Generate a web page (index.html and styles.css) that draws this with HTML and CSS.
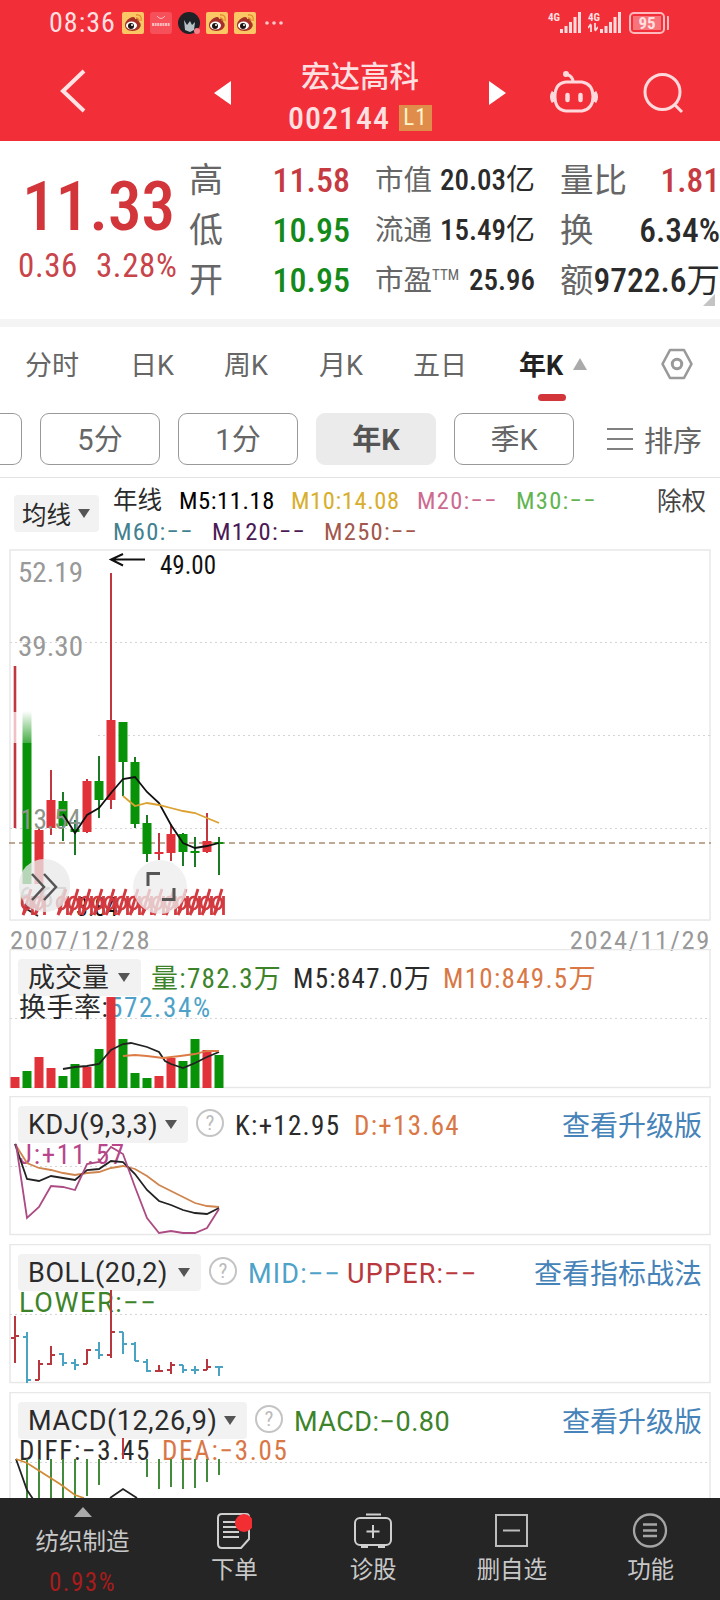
FILE: index.html
```html
<!DOCTYPE html>
<html lang="zh-CN">
<head>
    <meta charset="utf-8">
    <title>宏达高科 002144</title>
    <link rel="stylesheet" href="styles.css">
</head>
<body>
    <svg class="defs" width="0" height="0">
        <symbol id="weibo" viewBox="0 0 22 22">
            <rect width="22" height="22" rx="2" fill="#fbc765"/>
            <path d="M3 13c0-4 5-8 8-8 2 0 2 1 2 2 4-1 5 0 4 3 3 2 2 6-2 8-5 2-12 1-12-5z" fill="#a5302a"/>
            <ellipse cx="9.500" cy="13.500" rx="5.500" ry="4" fill="#fff"/>
            <circle cx="9" cy="14" r="3" fill="#1d1413"/>
            <circle cx="10" cy="13" r="1" fill="#fff"/>
            <path d="M14 3c4-1 6 2 5 6M14 6c2 0 3 1 2 3" fill="none" stroke="#e58a2c" stroke-width="1.300"/>
        </symbol>
        <symbol id="bars" viewBox="0 0 22 21">
            <path d="M1.500 17v4M6 14v7M10.500 10v11M15 5v16M19.500 0v21" stroke="#ffd9db" stroke-width="3"/>
        </symbol>
        <!-- ex-rights mark, repeated under the candles -->
        <symbol id="xr" viewBox="0 0 14 28" overflow="visible">
            <path d="M11 0L3 26M12.500 7v19M6 20l-3 6" fill="none" stroke="#d23a40" stroke-width="2.800"/>
            <ellipse cx="6.500" cy="14" rx="4.500" ry="6" fill="none" stroke="#d23a40" stroke-width="2.600"/>
        </symbol>
    </svg>

    <header class="top">
        <div class="status">
            <span class="clock">08:36</span>
            <svg width="22" height="22"><use href="#weibo"/></svg>
            <svg width="22" height="22" viewBox="0 0 22 22">
                <rect width="22" height="22" rx="3" fill="#f6505a"/>
                <path d="M7 4q4 5 8 0" fill="none" stroke="#fbb" stroke-width="1"/>
                <path d="M2 12.500h18" stroke="#fbb" stroke-width="3" stroke-dasharray="2 .6"/>
            </svg>
            <svg width="22" height="22" viewBox="0 0 22 22">
                <circle cx="11" cy="11" r="11" fill="#1c2226"/>
                <path d="M6 8l3 5 3-4 2 4 3-3-1 8-4 2-5-2z" fill="#b7c3c6"/>
                <circle cx="19" cy="19" r="3" fill="#f5808a"/>
            </svg>
            <svg width="22" height="22"><use href="#weibo"/></svg>
            <svg width="22" height="22"><use href="#weibo"/></svg>
            <svg class="more" width="18" height="4"><circle cx="2" cy="2" r="1.800"/><circle cx="9" cy="2" r="1.800"/><circle cx="16" cy="2" r="1.800"/></svg>
            <div class="signal">
                <span class="net">4G</span>
                <svg width="22" height="21"><use href="#bars"/></svg>
            </div>
            <div class="signal">
                <span class="net">4G<svg width="10" height="9" viewBox="0 0 10 9"><path d="M3 9V2M0 5l3-4M7 0v7M10 4L7 8" fill="none" stroke="#ffd9db" stroke-width="1.800"/></svg></span>
                <svg width="22" height="21"><use href="#bars"/></svg>
            </div>
            <span class="battery"><b>95</b></span>
        </div>
        <div class="nav">
            <svg class="back" width="26" height="44" viewBox="0 0 26 44"><path d="M24 2L3 22l21 20" fill="none" stroke="#ffe3e4" stroke-width="4"/></svg>
            <svg class="prev" width="17" height="24"><path d="M17 0v24L0 12z" fill="#fff"/></svg>
            <div class="title">
                <div class="name">宏达高科</div>
                <div class="code"><span>002144</span><em>L1</em></div>
            </div>
            <svg class="next" width="17" height="24"><path d="M0 0v24l17-12z" fill="#fff"/></svg>
            <svg class="robot" width="48" height="44" viewBox="0 0 48 44" fill="none" stroke="#ffd9db" stroke-width="3">
                <path d="M16 12h16q11 2 11 14.500T32 41H16Q5 40 5 26.500T16 12z"/>
                <path d="M23 12q0-6-7-8"/>
                <circle cx="16" cy="4" r="2" fill="#ffd9db" stroke-width="2"/>
                <path d="M3.500 22q-3 5 0 10M44.500 22q3 5 0 10" stroke-width="4"/>
                <path d="M17.500 25v5M30.500 25v5" stroke-width="4.500" stroke-linecap="round"/>
            </svg>
            <svg class="search" width="42" height="42" viewBox="0 0 42 42" fill="none" stroke="#ffd9db" stroke-width="3"><circle cx="19.500" cy="20" r="17.500"/><path d="M32 33l7 7"/></svg>
        </div>
    </header>

    <section class="quote">
        <div class="price">
            <div class="last">11.33</div>
            <div class="change"><span>0.36</span><span>3.28%</span></div>
        </div>
        <dl class="col range">
            <div><dt>高</dt><dd class="up">11.58</dd></div>
            <div><dt>低</dt><dd class="down">10.95</dd></div>
            <div><dt>开</dt><dd class="down">10.95</dd></div>
        </dl>
        <dl class="col value">
            <div><dt>市值</dt><dd>20.03<i>亿</i></dd></div>
            <div><dt>流通</dt><dd>15.49<i>亿</i></dd></div>
            <div><dt>市盈<sup>TTM</sup></dt><dd>25.96</dd></div>
        </dl>
        <dl class="col turn">
            <div><dt>量比</dt><dd class="up">1.81</dd></div>
            <div><dt>换</dt><dd>6.34%</dd></div>
            <div><dt>额</dt><dd>9722.6<i>万</i></dd></div>
        </dl>
        <svg class="corner" width="12" height="12"><path d="M12 0v12H0z" fill="#c4c4c4"/></svg>
    </section>

    <nav class="tabs">
        <span>分时</span>
        <span>日K</span>
        <span>周K</span>
        <span>月K</span>
        <span>五日</span>
        <span class="active">年K</span>
        <svg class="tri" width="14" height="12"><path d="M7 0l7 12H0z" fill="#aaa"/></svg>
        <svg class="gear" width="32" height="32" viewBox="0 0 32 32" fill="none" stroke="#999" stroke-width="2.600"><path d="M9 2h14l7.500 14L23 30H9L1.500 16z" stroke-linejoin="round"/><circle cx="16" cy="16" r="4.700" stroke-width="3"/></svg>
    </nav>
    <div class="periods">
        <span class="pill cut"></span>
        <span class="pill">5分</span>
        <span class="pill">1分</span>
        <span class="pill on">年K</span>
        <span class="pill">季K</span>
        <svg width="26" height="24"><path d="M0 2h26M0 12h26M0 22h26" stroke="#808080" stroke-width="2"/></svg>
        <span class="sort">排序</span>
    </div>

    <div class="legend">
        <span class="tag">均线<i class="caret"></i></span>
        <div class="ma">
            <div>
                <span class="w67 ink">年线</span>
                <span class="w112 black num">M5:11.18</span>
                <span class="w126 gold num">M10:14.08</span>
                <span class="w99 pink">M20:−−</span>
                <span class="lime">M30:−−</span>
            </div>
            <div>
                <span class="w99 teal">M60:−−</span>
                <span class="w112 purple">M120:−−</span>
                <span class="rust">M250:−−</span>
            </div>
        </div>
        <span class="ex">除权</span>
    </div>

    <svg class="chart" width="720" height="372" viewBox="0 549 720 372">
        <defs>
            <linearGradient id="fade" x1="0" y1="0" x2="0" y2="1">
                <stop offset="0" stop-color="#089208" stop-opacity="0"/>
                <stop offset="1" stop-color="#089208" stop-opacity=".75"/>
            </linearGradient>
        </defs>
        <rect class="frame" x="10" y="550" width="700" height="370"/>
        <path class="dots" d="M10 642.500H710M98 735.500H710M10 828.500H710"/>
        <path d="M9 843H711" stroke="#a98f72" stroke-width="1.500" stroke-dasharray="6 4"/>
        <g class="axis">
            <text x="18" y="582" textLength="65" lengthAdjust="spacingAndGlyphs">52.19</text>
            <text x="18" y="656" textLength="65" lengthAdjust="spacingAndGlyphs">39.30</text>
            <text x="19" y="907" textLength="48" lengthAdjust="spacingAndGlyphs">6.67</text>
        </g>

        <!-- wicks -->
        <path stroke="#c2363f" stroke-width="2" d="M39 828V880M51 770V835M87 779V833M111 573V809M159 833V860M171 824V861M207 813V853"/>
        <path stroke="#c2363f" stroke-width="2.600" d="M15 666V712M15 743V828"/>
        <path stroke="#f0c0c4" stroke-width="2.600" d="M15 712V743"/>
        <path stroke="#1c7a26" stroke-width="2" d="M63 792V841M75 820V855M99 756V818M123 762V796M135 757V828M147 815V862M183 833V866M195 837V867M219 837V875"/>
        <!-- bodies -->
        <path stroke="#e03238" stroke-width="9" d="M39 830V884M51 800V828M87 781V832M111 720V800M159 852V854M171 834V853M207 841V852"/>
        <path stroke="#089208" stroke-width="9" d="M27 743V884M63 801V826M75 829V832M99 781V800M123 722V762M135 762V824M147 823V854M183 834V852M195 851V853M219 842V844"/>
        <rect x="22.500" y="711" width="9" height="32" fill="url(#fade)"/>
        <text class="axis over" x="20" y="829" textLength="61" lengthAdjust="spacingAndGlyphs">13.54</text>
        <polyline class="line" stroke="#111" points="63,814 75,833 87,815 99,808 111,793 123,779 135,777 147,792 159,803 171,825 183,843 195,848 207,846 219,843"/>
        <polyline class="line" stroke="#dda12f" points="123,796 135,806 147,803 159,805 171,808 183,811 195,813 207,818 219,823"/>

        <path d="M38 916l-13-8M25 908l8-1" stroke="#222" stroke-width="2"/>
        <text class="mark" x="76" y="916" textLength="42" lengthAdjust="spacingAndGlyphs">3.84</text>
        <g>
            <use href="#xr" x="20" y="889" width="14" height="28"/><use href="#xr" x="32" y="889" width="14" height="28"/>
            <use href="#xr" x="55" y="889" width="14" height="28"/><use href="#xr" x="67" y="889" width="14" height="28"/>
            <use href="#xr" x="79" y="889" width="14" height="28"/><use href="#xr" x="91" y="889" width="14" height="28"/>
            <use href="#xr" x="103" y="889" width="14" height="28"/><use href="#xr" x="115" y="889" width="14" height="28"/>
            <use href="#xr" x="127" y="889" width="14" height="28"/><use href="#xr" x="139" y="889" width="14" height="28"/>
            <use href="#xr" x="151" y="889" width="14" height="28"/><use href="#xr" x="163" y="889" width="14" height="28"/>
            <use href="#xr" x="175" y="889" width="14" height="28"/><use href="#xr" x="187" y="889" width="14" height="28"/>
            <use href="#xr" x="199" y="889" width="14" height="28"/><use href="#xr" x="211" y="889" width="14" height="28"/>
        </g>

        <path d="M145 559.500H112M123 554l-12 5.500 12 6" fill="none" stroke="#111" stroke-width="2"/>
        <text class="mark" x="160" y="574" textLength="56" lengthAdjust="spacingAndGlyphs">49.00</text>

        <!-- floating buttons -->
        <rect x="19" y="859" width="51" height="53" rx="25" fill="#e9e9e9" opacity=".78"/>
        <path d="M32 874l12 13-12 13M44 874l12 13-12 13" fill="none" stroke="#555" stroke-width="2.500"/>
        <circle cx="160" cy="887" r="27" fill="#ededed" opacity=".78"/>
        <path d="M148 886V873.500h12M174 888v11.500h-12" fill="none" stroke="#555" stroke-width="3"/>
    </svg>
    <div class="dates"><span>2007/12/28</span><span>2024/11/29</span></div>

    <section class="panel">
        <svg width="720" height="147" viewBox="0 949 720 147">
            <rect class="frame" x="10" y="949.500" width="700" height="138"/>
            <path class="dots" d="M10 1018.500H710"/>
        </svg>
        <div class="info">
            <div class="row">
                <span class="tag t123">成交量<i class="caret"></i></span>
                <span class="green w142 v1">量:782.3万</span>
                <span class="ink w150">M5:847.0万</span>
                <span class="orange">M10:849.5万</span>
            </div>
            <div class="row second"><span class="ink w90">换手率:</span><span class="blue rate">572.34%</span></div>
        </div>
        <svg width="720" height="147" viewBox="0 949 720 147">
            <path stroke="#e03238" stroke-width="9" d="M15 1077V1088M39 1057V1088M51 1068V1088M87 1067V1088M111 997V1088M159 1076V1088M171 1058V1088M207 1050V1088"/>
            <path stroke="#089208" stroke-width="9" d="M27 1071V1088M63 1076V1088M75 1064V1088M99 1049V1088M123 1039V1088M135 1073V1088M147 1078V1088M183 1061V1088M195 1039V1088M219 1055V1088"/>
            <polyline class="line" stroke="#222" points="63,1069 75,1067 87,1066 99,1064 111,1050 123,1044 131,1043 147,1047 159,1052 165,1061 171,1064 183,1068 195,1063 207,1057 219,1052"/>
            <polyline class="line" stroke="#dc7b45" points="123,1056 135,1055 147,1056 163,1058 180,1056 195,1054 207,1051 219,1051"/>
        </svg>
    </section>

    <section class="panel">
        <svg width="720" height="148" viewBox="0 1096 720 148">
            <rect class="frame" x="10" y="1096.500" width="700" height="138"/>
            <path class="dots" d="M10 1166.500H710"/>
        </svg>
        <div class="info">
            <div class="row">
                <span class="tag wide t170">KDJ(9,3,3)<i class="caret"></i></span>
                <span class="help">?</span>
                <span class="ink w119">K:+12.95</span>
                <span class="orange">D:+13.64</span>
                <a>查看升级版</a>
            </div>
            <div class="row second"><span class="magenta">J:+11.57</span></div>
        </div>
        <svg width="720" height="148" viewBox="0 1096 720 148">
            <polyline class="line" stroke="#cf854d" points="15,1144 27,1163 39,1168 51,1170 63,1173 75,1175 87,1173 99,1172 111,1168 123,1166 135,1169 147,1176 159,1185 171,1191 183,1197 195,1203 207,1206 219,1207"/>
            <polyline class="line" stroke="#222" points="15,1144 27,1179 39,1181 51,1176 63,1178 75,1180 87,1170 99,1169 111,1161 123,1162 135,1174 147,1190 159,1201 171,1205 183,1210 195,1213 207,1214 219,1208"/>
            <polyline class="line" stroke="#ac4b83" points="16,1144 27,1218 39,1207 51,1186 63,1187 75,1190 87,1164 99,1162 111,1147 123,1154 135,1187 147,1218 159,1233 171,1231 183,1233 195,1233 207,1228 219,1209"/>
        </svg>
    </section>

    <section class="panel">
        <svg width="720" height="148" viewBox="0 1244 720 148">
            <rect class="frame" x="10" y="1244.500" width="700" height="138"/>
            <path class="dots" d="M10 1314.500H710"/>
        </svg>
        <div class="info">
            <div class="row">
                <span class="tag wide t183">BOLL(20,2)<i class="caret"></i></span>
                <span class="help">?</span>
                <span class="blue wide w99">MID:−−</span>
                <span class="crimson wide">UPPER:−−</span>
                <a>查看指标战法</a>
            </div>
            <div class="row second"><span class="green wide lower">LOWER:−−</span></div>
        </div>
        <svg width="720" height="148" viewBox="0 1244 720 148">
            <path fill="none" stroke="#b8363e" stroke-width="2" d="M15 1316V1363M11 1338h4M15 1336h4M39 1360V1380M35 1380h4M39 1364h4M51 1346V1365M47 1364h4M51 1355h4M87 1349V1364M83 1364h4M87 1350h4M111 1290V1358M107 1355h4M111 1332h4M159 1365V1371M155 1371h8M171 1362V1374M167 1370h4M171 1365h4M207 1359V1370M203 1370h4M207 1367h4"/>
            <path fill="none" stroke="#4ba3c3" stroke-width="2" d="M27 1332V1383M23 1337h4M27 1380h4M63 1353V1366M59 1354h4M63 1363h4M75 1359V1370M71 1363h4M75 1365h4M99 1342V1359M95 1350h4M99 1355h4M123 1332V1354M119 1332h4M123 1344h4M135 1342V1361M131 1344h4M135 1361h4M147 1359V1372M143 1362h4M147 1371h4M183 1365V1373M179 1365h4M183 1370h4M195 1366V1374M191 1370h8M219 1367V1376M215 1367h8"/>
        </svg>
    </section>

    <section class="panel">
        <svg width="720" height="106" viewBox="0 1392 720 106">
            <path class="frame" d="M10 1500V1392.500H710V1500"/>
            <path class="dots" d="M10 1462.500H710"/>
        </svg>
        <div class="info">
            <div class="row">
                <span class="tag wide t229">MACD(12,26,9)<i class="caret"></i></span>
                <span class="help">?</span>
                <span class="green wide macd">MACD:−0.80</span>
                <a>查看升级版</a>
            </div>
            <div class="row second"><span class="ink w143">DIFF:−3.45</span><span class="orange">DEA:−3.05</span></div>
        </div>
        <svg width="720" height="106" viewBox="0 1392 720 106">
            <path stroke="#448a3d" stroke-width="2" d="M27 1459V1498M39 1459V1498M51 1459V1498M63 1459V1498M75 1459V1498M87 1459V1496M99 1459V1485M147 1459V1477M159 1459V1489M171 1459V1487M183 1459V1489M195 1459V1488M207 1459V1482M219 1459V1475"/>
            <path stroke="#c2363f" stroke-width="2" d="M123 1438V1459"/>
            <polyline class="line" stroke="#222" points="16,1459 27,1490 33,1499"/>
            <polyline class="line" stroke="#222" points="110,1498 123,1489 137,1498"/>
            <polyline class="line" stroke="#d08b35" points="16,1459 27,1463 60,1484 75,1495 84,1498"/>
        </svg>
    </section>

    <footer class="bottom">
        <div class="sector">
            <svg width="18" height="10"><path d="M9 0l9 10H0z" fill="#aaa"/></svg>
            <span>纺织制造</span>
            <b>0.93%</b>
        </div>
        <div class="item">
            <svg width="36" height="38" viewBox="0 0 36 38" fill="none" stroke="#cfcfcf" stroke-width="2"><path d="M6 2h24q3 0 3 3v22l-8 9H6q-4 0-4-4V6q0-4 4-4z"/><path d="M7 10h14M7 15h14M7 20h16M7 25h16"/><circle cx="28" cy="11" r="9" fill="#f22e32" stroke="none"/></svg>
            <span>下单</span>
        </div>
        <div class="item">
            <svg width="38" height="38" viewBox="0 0 38 38" fill="none" stroke="#cfcfcf" stroke-width="2"><rect x="1" y="6" width="36" height="27" rx="5"/><path d="M12 2.500h15M19 13v13M12.500 19.500h13M7 35h7M24 35h7"/></svg>
            <span>诊股</span>
        </div>
        <div class="item">
            <svg width="38" height="38" viewBox="0 0 38 38" fill="none" stroke="#bdbdbd" stroke-width="2"><rect x="3" y="3" width="31" height="31"/><path d="M10 18.500h17"/></svg>
            <span>删自选</span>
        </div>
        <div class="item">
            <svg width="38" height="38" viewBox="0 0 38 38" fill="none" stroke="#a5a5a5" stroke-width="2.300"><circle cx="18" cy="18.500" r="16"/><path d="M11 12.500h14M11 18.500h14M11 24h14"/></svg>
            <span>功能</span>
        </div>
    </footer>
</body>
</html>
```

FILE: styles.css
```css
* {
    box-sizing: border-box;
}

body {
    margin: 0;
    width: 720px;
    height: 1600px;
    overflow: hidden;
    background: #fff;
    color: #2b2b2b;
    font-family: Roboto, "Noto Sans CJK SC", sans-serif;
    font-stretch: 87%;
}

svg {
    display: block;
    flex: none;
}

i, em {
    font-style: normal;
}

.defs {
    display: none;
}

/* header */
.top {
    height: 141px;
    background: #f22f38;
    color: #ffdfe0;
}

.status {
    display: flex;
    align-items: center;
    gap: 6px;
    height: 45px;
    padding: 0 55px 0 49px;
}

.clock {
    width: 67px;
    font-size: 28px;
    letter-spacing: 1px;
}

.more {
    margin: 0 auto 0 3px;
    fill: #ffc9cc;
}

.signal {
    display: flex;
    gap: 0;
    width: 34px;
}

.net {
    width: 12px;
    height: 21px;
    font-size: 11px;
    font-weight: bold;
    line-height: 11px;
}

.battery {
    width: 36px;
    height: 22px;
    margin-left: 1px;
    padding: 2px;
    border: 2px solid #ffb9bd;
    border-radius: 5px;
    font-size: 17px;
    line-height: 14px;
    text-align: center;
    box-shadow: 3px 0 0 -1px #f22f38, 8px 0 0 -4px #ffb9bd;
}

.battery b {
    display: block;
    background: #f7747b;
}

.nav {
    display: flex;
    align-items: center;
    height: 92px;
}

.back { margin-left: 60px; }
.prev { margin-left: 128px; margin-top: 4px; }
.next { margin-left: 55px; margin-top: 4px; }
.robot { margin-left: 44px; margin-top: 2px; }
.search { margin-left: 45px; margin-top: 3px; }

.title {
    width: 146px;
    margin-left: 57px;
    padding-top: 11px;
    white-space: nowrap;
}

.name {
    padding-left: 13px;
    font-size: 29.5px;
    font-weight: 500;
    line-height: 42px;
}

.code {
    display: flex;
    align-items: center;
    gap: 9px;
    font-size: 32px;
    font-weight: 500;
    line-height: 40px;
    letter-spacing: 1px;
}

.code em {
    width: 33px;
    height: 26px;
    background: #e08d4c;
    color: #fff3c8;
    font-size: 23px;
    font-weight: normal;
    line-height: 26px;
    text-align: center;
}

/* quote */
.quote {
    display: flex;
    height: 186px;
    padding-top: 14px;
    border-bottom: 8px solid #f4f4f4;
    white-space: nowrap;
}

.price {
    width: 189px;
    color: #d2363a;
}

.last {
    margin-top: 16px;
    padding-left: 22px;
    font-size: 68px;
    font-weight: 500;
    line-height: 72px;
    letter-spacing: -.4px;
}

.change {
    display: flex;
    gap: 18px;
    padding-left: 18px;
    font-size: 33px;
    font-weight: 450;
    line-height: 46px;
    letter-spacing: .6px;
    color: #c8444a;
}

.col {
    margin: 0;
    line-height: 51px;
}

.col div {
    display: flex;
    justify-content: space-between;
    height: 50px;
}

.col dt {
    width: 0;
    color: #666;
}

.col dd {
    margin: 0;
    font-weight: 480;
}

.col i {
    font-weight: normal;
}

.range { width: 161px; font-size: 34px; }
.value { width: 160px; margin-left: 25px; font-size: 28.5px; }
.value dd { font-size: 29px; }
.turn { width: 160px; margin-left: 25px; font-size: 33.500px; }

.col .up { color: #c63a41; }
.col .down { color: #138a1a; }

sup {
    font-size: 15px;
    line-height: 0;
}

.corner {
    align-self: flex-end;
    margin: 0 0 13px -17px;
}

/* tabs */
.tabs {
    display: flex;
    height: 78px;
    padding-left: 25px;
    font-size: 27px;
    font-stretch: 100%;
    line-height: 79px;
    color: #666;
    white-space: nowrap;
}

.tabs span:nth-child(1) { width: 105px; }
.tabs span:nth-child(2) { width: 94px; }
.tabs span:nth-child(3) { width: 95px; }
.tabs span:nth-child(4) { width: 94px; }
.tabs span:nth-child(5) { width: 106px; }

.tabs .active {
    width: 49px;
    color: #222;
    font-weight: bold;
}

.tabs .active::after {
    content: "";
    display: block;
    width: 28px;
    height: 7px;
    margin: -12px 0 0 19px;
    border-radius: 4px;
    background: #d2363a;
}

.tri { margin: 31px 0 0 5px; }
.gear { margin: 21px 0 0 74px; }

.periods {
    display: flex;
    align-items: center;
    height: 73px;
    padding-bottom: 4px;
    border-bottom: 1px solid #e2e2e2;
    color: #666;
    font-size: 29px;
    font-stretch: 100%;
}

.pill {
    width: 120px;
    height: 52px;
    margin-right: 18px;
    border: 1px solid #999;
    border-radius: 9px;
    line-height: 53px;
    text-align: center;
}

.pill.cut {
    width: 22px;
    border-left: 0;
    border-radius: 0 9px 9px 0;
}

.pill.on {
    border-color: #ebebeb;
    background: #ebebeb;
    color: #555;
    font-weight: bold;
}

.periods svg { margin-left: 15px; }
.sort { margin-left: 11px; }

/* moving average legend */
.legend {
    display: flex;
    height: 71px;
    padding-left: 14px;
    font-size: 24.5px;
    white-space: nowrap;
}

.tag {
    display: flex;
    align-items: center;
    justify-content: space-between;
    height: 37px;
    padding: 0 11px 0 10px;
    border-radius: 4px;
    background: #f2f2f2;
    color: #2b2b2b;
}

.legend .tag {
    width: 85px;
    margin-top: 17px;
    padding: 0 9px 0 8px;
}

.caret {
    border: 6.5px solid transparent;
    border-top: 9px solid #555;
    border-bottom: 0;
}

.ma {
    width: 544px;
    margin-left: 14px;
    padding-top: 7px;
    line-height: 31px;
    letter-spacing: 1.3px;
}

.ma div, .row {
    display: flex;
}

.ma .ink {
    letter-spacing: 0;
}

.ma .num {
    letter-spacing: .6px;
}

.ex {
    line-height: 47px;
    color: #444;
}

.w67 { width: 66px; }
.w90 { width: 90px; }
.w99 { width: 99px; }
.w112 { width: 112px; }
.w119 { width: 119px; }
.w126 { width: 126px; }
.w142 { width: 142px; }
.w143 { width: 143px; }
.w150 { width: 150px; }

.ink { color: #2b2b2b; }
.black { color: #000; }
.gold { color: #d9ae2c; }
.pink { color: #cc6b90; }
.lime { color: #62b450; }
.teal { color: #42818f; }
.purple { color: #4b1a55; }
.rust { color: #a2584c; }
.green { color: #3c832a; }
.orange { color: #d97846; }
.blue { color: #4ea2c8; }
.crimson { color: #b8383d; }
.magenta { color: #b9468a; }

/* charts */
.frame {
    fill: none;
    stroke: #e8e8e8;
    stroke-width: 1.500;
}

.dots {
    fill: none;
    stroke: #d4d4d4;
    stroke-dasharray: 2 3;
}

.line {
    fill: none;
    stroke-width: 1.8;
}

.axis {
    fill: #999;
    font-size: 27px;
}

.over { fill: #8d9489; }

.mark {
    fill: #111;
    font-size: 25px;
}

.dates {
    display: flex;
    justify-content: space-between;
    height: 28px;
    padding: 0 9px 0 10px;
    color: #999;
    font-size: 26.5px;
    line-height: 38px;
    letter-spacing: 1.7px;
}

.panel {
    display: grid;
}

/* chart and captions share one cell */
.panel > * {
    grid-area: 1 / 1;
}

.info {
    padding: 10px 18px 0;
    font-size: 27px;
    letter-spacing: 1.3px;
    white-space: nowrap;
}

.row {
    height: 32px;
    line-height: 40px;
}

.second {
    padding-left: 1px;
    line-height: 34px;
    letter-spacing: 1.7px;
}

.w90 { letter-spacing: .5px; }

.row a {
    margin-left: auto;
    color: #4683b8;
    font-size: 28px;
    line-height: 41px;
    letter-spacing: 0;
}

.wide {
    font-stretch: 100%;
    letter-spacing: 1.2px;
}

.lower { letter-spacing: 1.6px; }
.macd { letter-spacing: .5px; }

.tag.wide { letter-spacing: .6px; }

.t123 { width: 123px; letter-spacing: 0; }
.t170 { width: 170px; }
.t183 { width: 183px; }
.t229 { width: 229px; }
.v1 { margin-left: 10px; }

.help {
    width: 28px;
    height: 28px;
    margin: 3px 11px 0 8px;
    border: 2px solid #c4c4c4;
    border-radius: 50%;
    color: #bbb;
    font-size: 21px;
    line-height: 25px;
    letter-spacing: 0;
    text-align: center;
}

/* bottom bar */
.bottom {
    display: grid;
    grid-template-columns: 165px repeat(4, 1fr);
    position: relative;
    height: 102px;
    background: #252525;
    color: #c8c8c8;
    font-size: 23.5px;
}

.sector, .item {
    display: flex;
    flex-direction: column;
    align-items: center;
}

.sector { padding-top: 9px; }

.sector span {
    line-height: 50px;
}

.sector b {
    color: #a81c1c;
    font-size: 25px;
    font-weight: normal;
    line-height: 31px;
    letter-spacing: 1.5px;
}

.item { padding-top: 14px; }

.item span {
    line-height: 41px;
}
```
